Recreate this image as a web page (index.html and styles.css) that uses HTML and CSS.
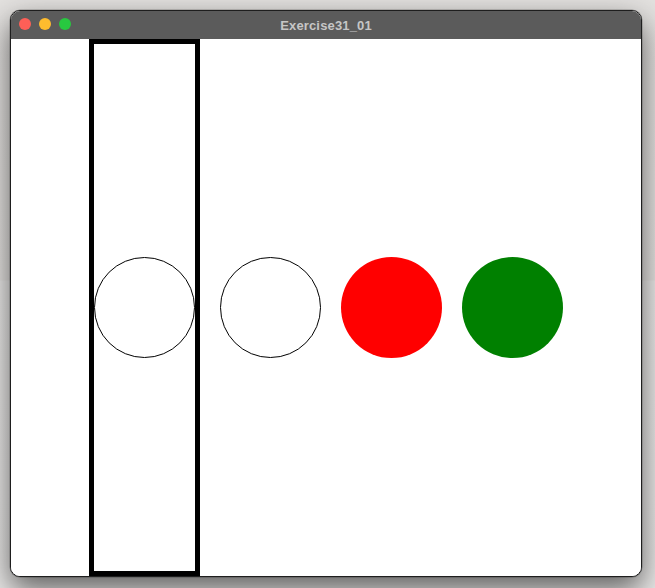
FILE: index.html
```html
<!DOCTYPE html>
<html lang="en">
<head>
<meta charset="utf-8">
<title>Exercise31_01</title>
<link rel="stylesheet" href="styles.css">
</head>
<body>
<div class="desktop">
  <div class="window">
    <div class="titlebar">
      <div class="lights">
        <span class="light close"></span>
        <span class="light min"></span>
        <span class="light max"></span>
      </div>
      <div class="title">Exercise31_01</div>
    </div>
    <div class="content">
      <div class="frame">
        <div class="circle outline"></div>
      </div>
      <div class="circle outline"></div>
      <div class="circle red"></div>
      <div class="circle green"></div>
    </div>
  </div>
</div>
</body>
</html>
```
FILE: styles.css
```css
* { box-sizing: border-box; }
html, body {
  margin: 0;
  padding: 0;
  width: 655px;
  height: 588px;
  overflow: hidden;
}
body {
  background: linear-gradient(to bottom, #e3e1df 0px, #e6e4e2 280px, #ecebea 281px, #e9e8e7 588px);
  font-family: "Liberation Sans", Arial, sans-serif;
}
.desktop {
  padding: 10px 0 0 10px;
}
.window {
  width: 632px;
  height: 567px;
  border: 1px solid #1e1e1e;
  border-radius: 10px;
  overflow: hidden;
  display: flex;
  flex-direction: column;
  background: #ffffff;
  box-shadow: 0 12px 30px rgba(0, 0, 0, 0.6), 0 0 0 0.5px rgba(0, 0, 0, 0.3);
}
.titlebar {
  height: 28px;
  flex: none;
  background: #5b5b5b;
  position: relative;
  display: flex;
  align-items: center;
  justify-content: center;
}
.lights {
  position: absolute;
  left: 8px;
  top: 7px;
  display: flex;
  gap: 8px;
}
.light {
  width: 12px;
  height: 12px;
  border-radius: 50%;
  display: block;
}
.close { background: #fe5f57; }
.min { background: #febc2e; }
.max { background: #28c840; }
.title {
  color: #c6c6c6;
  font-weight: bold;
  font-size: 13px;
  letter-spacing: 0.15px;
  padding-top: 1px;
}
.content {
  flex: 1;
  display: flex;
  align-items: center;
  justify-content: center;
  gap: 20px;
  background: #ffffff;
}
.frame {
  align-self: stretch;
  width: 111px;
  border: 5px solid #000000;
  display: flex;
  align-items: center;
  justify-content: center;
}
.circle {
  width: 101px;
  height: 101px;
  border-radius: 50%;
  flex: none;
}
.outline {
  border: 1px solid #000000;
  background: #ffffff;
}
.red { background: #ff0000; }
.green { background: #008000; }
```
